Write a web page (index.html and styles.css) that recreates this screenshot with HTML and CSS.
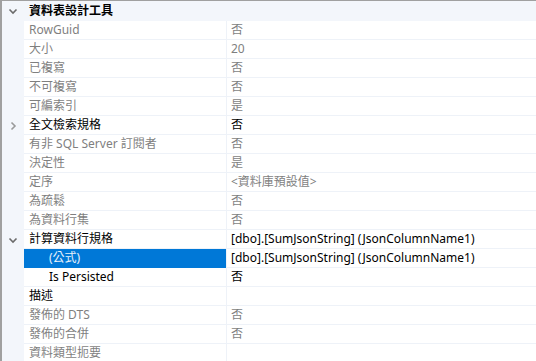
FILE: index.html
```
<!DOCTYPE html>
<html>
<head>
    <title>資料表設計工具</title>
    <link rel="stylesheet" href="styles.css">
</head>
<body>
    <div class="grid">
        <div class="row header">
            <div class="gutter">
                <svg class="chev" width="10" height="10" viewBox="0 0 10 10"><path d="M1.5 3.5 L5 7 L8.5 3.5" fill="none" stroke="#6b6b6b" stroke-width="1.6"/></svg>
            </div>
            <div class="title">資料表設計工具</div>
        </div>
        <div class="row"><div class="gutter"></div><div class="name dim">RowGuid</div><div class="value dim">否</div></div>
        <div class="row"><div class="gutter"></div><div class="name dim">大小</div><div class="value dim">20</div></div>
        <div class="row"><div class="gutter"></div><div class="name dim">已複寫</div><div class="value dim">否</div></div>
        <div class="row"><div class="gutter"></div><div class="name dim">不可複寫</div><div class="value dim">否</div></div>
        <div class="row"><div class="gutter"></div><div class="name dim">可編索引</div><div class="value dim">是</div></div>
        <div class="row">
            <div class="gutter">
                <svg class="chev" width="10" height="10" viewBox="0 0 10 10"><path d="M3.5 1.5 L7 5 L3.5 8.5" fill="none" stroke="#9a9a9a" stroke-width="1.6"/></svg>
            </div>
            <div class="name">全文檢索規格</div><div class="value">否</div>
        </div>
        <div class="row"><div class="gutter"></div><div class="name dim">有非 SQL Server 訂閱者</div><div class="value dim">否</div></div>
        <div class="row"><div class="gutter"></div><div class="name dim">決定性</div><div class="value dim">是</div></div>
        <div class="row"><div class="gutter"></div><div class="name dim">定序</div><div class="value dim">&lt;資料庫預設值&gt;</div></div>
        <div class="row"><div class="gutter"></div><div class="name dim">為疏鬆</div><div class="value dim">否</div></div>
        <div class="row"><div class="gutter"></div><div class="name dim">為資料行集</div><div class="value dim">否</div></div>
        <div class="row">
            <div class="gutter">
                <svg class="chev" width="10" height="10" viewBox="0 0 10 10"><path d="M1.5 3.5 L5 7 L8.5 3.5" fill="none" stroke="#6b6b6b" stroke-width="1.6"/></svg>
            </div>
            <div class="name">計算資料行規格</div><div class="value">[dbo].[SumJsonString] (JsonColumnName1)</div>
        </div>
        <div class="row"><div class="gutter"></div><div class="name sub selected">(公式)</div><div class="value">[dbo].[SumJsonString] (JsonColumnName1)</div></div>
        <div class="row"><div class="gutter"></div><div class="name sub">Is Persisted</div><div class="value">否</div></div>
        <div class="row"><div class="gutter"></div><div class="name">描述</div><div class="value"></div></div>
        <div class="row"><div class="gutter"></div><div class="name dim">發佈的 DTS</div><div class="value dim">否</div></div>
        <div class="row"><div class="gutter"></div><div class="name dim">發佈的合併</div><div class="value dim">否</div></div>
        <div class="row"><div class="gutter"></div><div class="name dim">資料類型扼要</div><div class="value dim"></div></div>
    </div>
</body>
</html>
```

FILE: styles.css
```
html, body {
    margin: 0;
    padding: 0;
    background: #ffffff;
}
body {
    font-family: "Noto Sans", "Noto Sans CJK TC", sans-serif;
    font-size: 12px;
    color: #000;
    height: 361px;
    overflow: hidden;
}
.grid {
    border-top: 1px solid #a0a0a0;
    border-left: 2px solid #a0a0a0;
    background: #f3f6fb;
    min-height: 360px;
}
.row {
    display: flex;
    height: 19px;
}
.row.header {
    height: 20px;
}
.gutter {
    width: 22px;
    flex: none;
    display: flex;
    align-items: center;
    justify-content: center;
    background: #f3f6fb;
}
.title {
    flex: 1;
    font-weight: bold;
    padding-left: 5px;
    line-height: 20px;
}
.name, .value {
    background: #fff;
    border-bottom: 1px solid #eef2f8;
    line-height: 18px;
    white-space: nowrap;
    overflow: hidden;
}
.name {
    width: 197px;
    flex: none;
    padding-left: 5px;
}
.name.sub {
    padding-left: 25px;
    width: 177px;
}
.value {
    flex: 1;
    border-left: 1px solid #eef2f8;
    padding-left: 4px;
}
.dim {
    color: #7f7f7f;
}
.selected {
    background: #0078d7;
    color: #e8f1fb;
    border-bottom-color: #0078d7;
}
```
